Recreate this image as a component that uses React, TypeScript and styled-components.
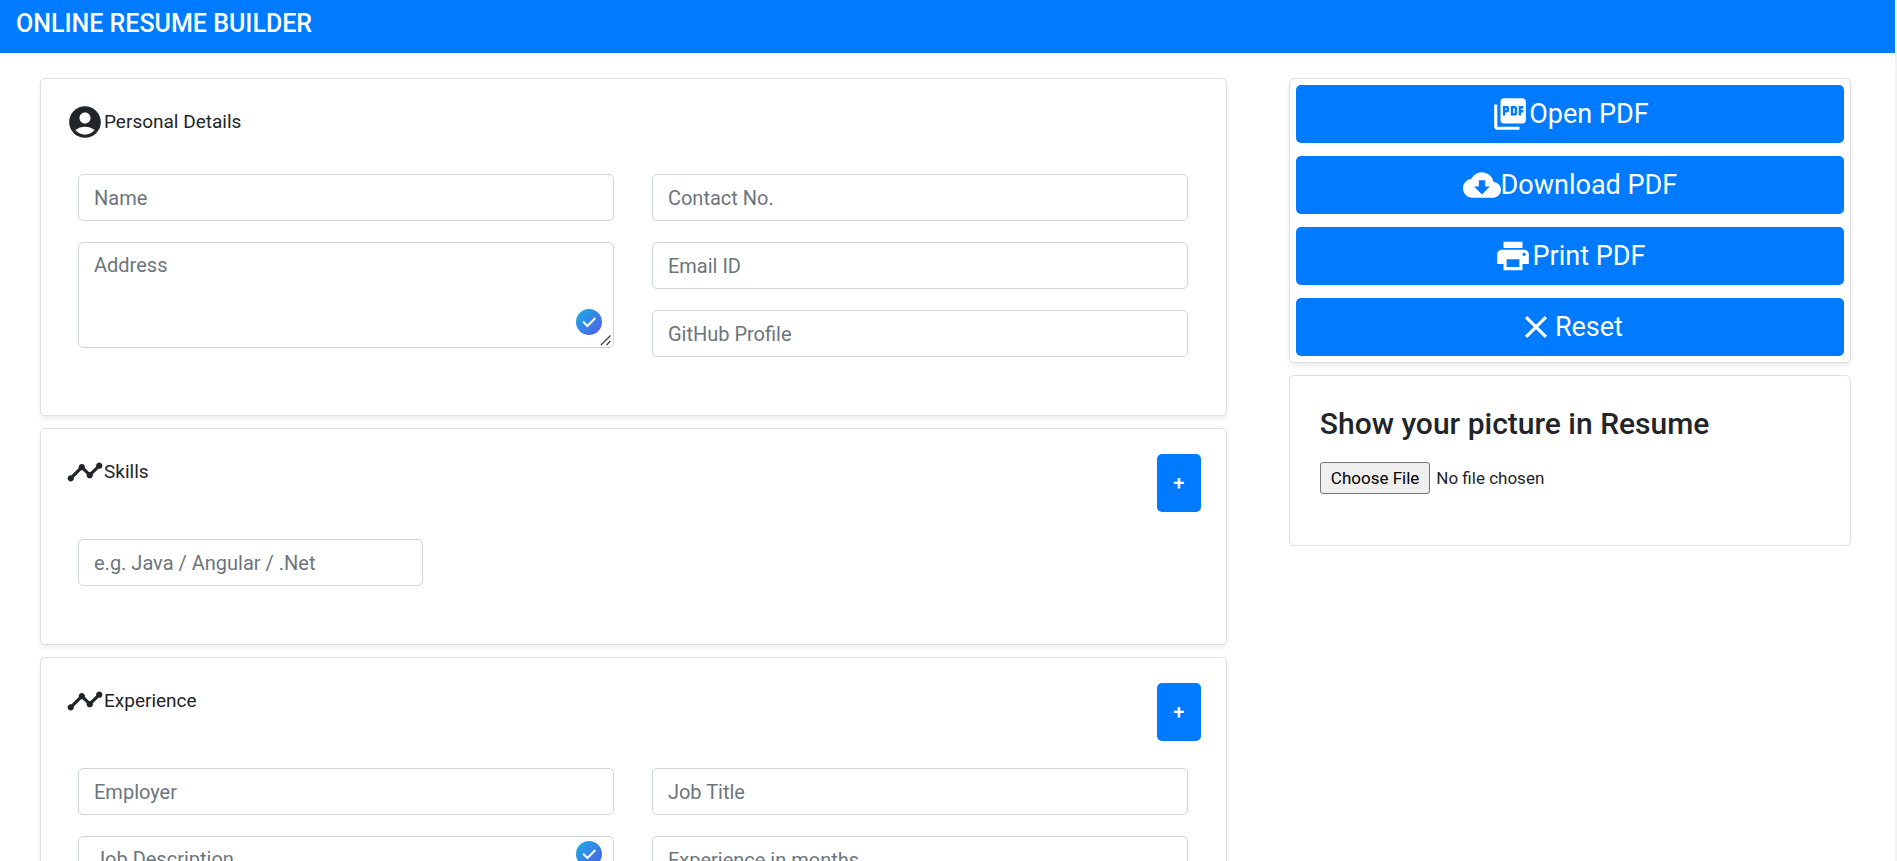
import React from 'react';
import styled, { createGlobalStyle } from 'styled-components';
import {
  MdAccountCircle,
  MdClear,
  MdCloudDownload,
  MdPictureAsPdf,
  MdPrint,
  MdTimeline,
} from 'react-icons/md';

const GlobalStyle = createGlobalStyle`
  *, *::before, *::after { box-sizing: border-box; }
  body {
    margin: 0;
    background: #fff;
    color: #212529;
    font-family: Roboto, "Liberation Sans", sans-serif;
    font-size: 20px;
    line-height: 30px;
  }
  button, input, textarea { font-family: inherit; }
`;

const Page = styled.div`
  min-height: 100vh;
  border-right: 2px solid #f1f1f1;
`;

const Header = styled.header`
  padding: 9px 16px 14px;
  background: #007bff;
`;

const Brand = styled.h1`
  margin: 0;
  color: #fff;
  font-size: 25px;
  line-height: 30px;
  font-weight: 500;
`;

const Layout = styled.main`
  display: grid;
  grid-template-columns: minmax(0, 19fr) minmax(0, 9fr);
  align-items: start;
  gap: 62px;
  padding: 25px 44px 25px 40px;
`;

const Column = styled.div`
  display: flex;
  flex-direction: column;
  gap: 12px;
`;

const Card = styled.section<{ $raised?: boolean }>`
  border: 1px solid #dfdfdf;
  border-radius: 5px;
  background: #fff;
  box-shadow: ${(p) => (p.$raised ? '0 3px 5px rgba(0, 0, 0, 0.075)' : 'none')};
`;

const FormCard = styled(Card)`
  padding: 25px 25px 58px;
`;

const ActionCard = styled(Card)`
  display: flex;
  flex-direction: column;
  gap: 13px;
  padding: 6px;
`;

const PictureCard = styled(Card)`
  padding: 30px 30px 51px;
`;

const CardHead = styled.div<{ $tall?: boolean }>`
  display: flex;
  justify-content: space-between;
  align-items: flex-start;
  height: ${(p) => (p.$tall ? '85px' : '70px')};
`;

const CardTitle = styled.h2`
  display: flex;
  align-items: center;
  height: 36px;
  margin: 0;
  font-size: 19px;
  line-height: 24px;
  font-weight: 400;
`;

const Icon = styled.span`
  display: flex;
  flex: none;
  font-size: 38px;
`;

const AddButton = styled.button`
  width: 44px;
  height: 58px;
  padding: 0;
  border: 0;
  border-radius: 5px;
  background: #007bff;
  color: #fff;
  font-size: 20px;
  line-height: 30px;
  font-weight: 500;
`;

const Fields = styled.div`
  display: grid;
  grid-template-columns: repeat(2, minmax(0, 1fr));
  gap: 38px;
  padding: 0 13px 0 12px;
`;

const FieldStack = styled.div`
  display: flex;
  flex-direction: column;
  gap: 21px;
`;

const ShortField = styled.div`
  width: 345px;
  max-width: 100%;
`;

const Input = styled.input`
  display: block;
  width: 100%;
  height: 47px;
  padding: 7px 15px;
  border: 1px solid #ced4da;
  border-radius: 5px;
  background: #fff;
  color: #495057;
  font-size: 20px;
  line-height: 30px;
  &::placeholder { color: #6c757d; opacity: 1; }
`;

const TextAreaWrap = styled.div`
  position: relative;
`;

const TextArea = styled.textarea`
  display: block;
  width: 100%;
  height: 106px;
  padding: 7px 15px;
  border: 1px solid #ced4da;
  border-radius: 5px;
  background: #fff;
  color: #495057;
  font-size: 20px;
  line-height: 30px;
  resize: vertical;
  &::placeholder { color: #6c757d; opacity: 1; }
  &::-webkit-resizer { background: transparent; }
`;

const Grip = styled.svg`
  position: absolute;
  right: 2px;
  bottom: 2px;
  width: 12px;
  height: 12px;
  pointer-events: none;
`;

const Badge = styled.svg<{ $top?: boolean }>`
  position: absolute;
  right: 12px;
  ${(p) => (p.$top ? 'top: 5px;' : 'bottom: 13px;')}
  width: 26px;
  height: 26px;
`;

const ActionButton = styled.button`
  display: flex;
  align-items: center;
  justify-content: center;
  width: 100%;
  height: 58px;
  padding: 0;
  border: 0;
  border-radius: 5px;
  background: #007bff;
  color: #fff;
  font-size: 27px;
  line-height: 36px;
`;

const PictureTitle = styled.h2`
  margin: 0 0 20px;
  font-size: 30px;
  line-height: 36px;
  font-weight: 500;
`;

const FileInput = styled.input`
  display: block;
  width: 100%;
  color: #212529;
  font-size: 17px;
  line-height: 24px;
  &::file-selector-button {
    height: 32px;
    margin: 0 6px 0 0;
    padding: 0 10px;
    border: 1px solid #767676;
    border-radius: 3px;
    background: #efefef;
    color: #000;
    font-family: inherit;
    font-size: 17px;
  }
`;

function CheckBadge({ id, top }: { id: string; top?: boolean }) {
  return (
    <Badge $top={top} viewBox="0 0 26 26" aria-hidden="true">
      <defs>
        <linearGradient id={id} x1="0" y1="0" x2="1" y2="1">
          <stop offset="0.1" stopColor="#1da8e6" />
          <stop offset="0.9" stopColor="#5061e4" />
        </linearGradient>
      </defs>
      <circle cx="13" cy="13" r="13" fill={`url(#${id})`} />
      <path d="M7 12.6l4.4 4.4L19.4 9" fill="none" stroke="#fff" strokeWidth="2" />
    </Badge>
  );
}

function Field({ label }: { label: string }) {
  return <Input type="text" placeholder={label} aria-label={label} />;
}

function LongField({ label, id, badgeTop }: { label: string; id: string; badgeTop?: boolean }) {
  return (
    <TextAreaWrap>
      <TextArea placeholder={label} aria-label={label} />
      <Grip viewBox="0 0 12 12" aria-hidden="true">
        <path d="M1 11L10.5 1.5M6.5 11L10.5 7" fill="none" stroke="#444" strokeWidth="1.4" />
      </Grip>
      <CheckBadge id={id} top={badgeTop} />
    </TextAreaWrap>
  );
}

const actions = [
  { label: 'Open PDF', icon: <MdPictureAsPdf /> },
  { label: 'Download PDF', icon: <MdCloudDownload /> },
  { label: 'Print PDF', icon: <MdPrint /> },
  { label: 'Reset', icon: <MdClear /> },
];

export default function App() {
  return (
    <Page>
      <GlobalStyle />
      <Header>
        <Brand>ONLINE RESUME BUILDER</Brand>
      </Header>
      <Layout>
        <Column>
          <FormCard $raised>
            <CardHead>
              <CardTitle>
                <Icon><MdAccountCircle /></Icon>
                Personal Details
              </CardTitle>
            </CardHead>
            <Fields>
              <FieldStack>
                <Field label="Name" />
                <LongField label="Address" id="address-check" />
              </FieldStack>
              <FieldStack>
                <Field label="Contact No." />
                <Field label="Email ID" />
                <Field label="GitHub Profile" />
              </FieldStack>
            </Fields>
          </FormCard>

          <FormCard $raised>
            <CardHead $tall>
              <CardTitle>
                <Icon><MdTimeline /></Icon>
                Skills
              </CardTitle>
              <AddButton type="button" aria-label="Add skill">+</AddButton>
            </CardHead>
            <Fields>
              <ShortField>
                <Field label="e.g. Java / Angular / .Net" />
              </ShortField>
            </Fields>
          </FormCard>

          <FormCard $raised>
            <CardHead $tall>
              <CardTitle>
                <Icon><MdTimeline /></Icon>
                Experience
              </CardTitle>
              <AddButton type="button" aria-label="Add experience">+</AddButton>
            </CardHead>
            <Fields>
              <FieldStack>
                <Field label="Employer" />
                <LongField label="Job Description" id="job-check" badgeTop />
              </FieldStack>
              <FieldStack>
                <Field label="Job Title" />
                <Field label="Experience in months" />
              </FieldStack>
            </Fields>
          </FormCard>
        </Column>

        <Column>
          <ActionCard $raised>
            {actions.map((a) => (
              <ActionButton type="button" key={a.label}>
                <Icon>{a.icon}</Icon>
                {a.label}
              </ActionButton>
            ))}
          </ActionCard>
          <PictureCard>
            <PictureTitle>Show your picture in Resume</PictureTitle>
            <FileInput type="file" aria-label="Show your picture in Resume" />
          </PictureCard>
        </Column>
      </Layout>
    </Page>
  );
}
